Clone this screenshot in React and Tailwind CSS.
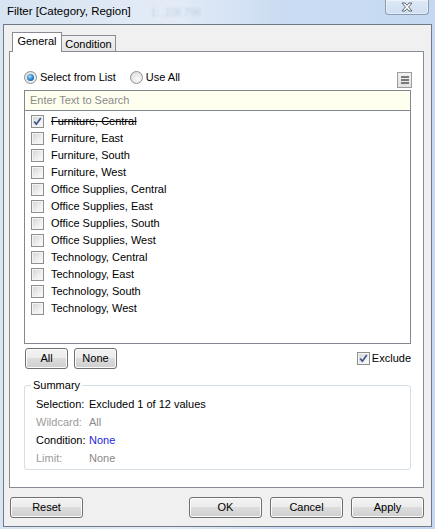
import React from "react";

function Check({ checked }) {
  return (
    <span className="flex w-[13px] h-[13px] shrink-0 border border-[#8e8f8f] bg-[#f4f4f4] p-px">
      <span className="flex w-full h-full items-center justify-center bg-[linear-gradient(135deg,#d6d7d9,#eeeeee_60%,#fafafa)]">
        {checked && (
          <svg width="9" height="9" viewBox="0 0 9 9">
            <path d="M1.2 4.6 L3.4 7.2 L7.8 0.9" fill="none" stroke="#3b5590" strokeWidth="1.7" />
          </svg>
        )}
      </span>
    </span>
  );
}

function Radio({ selected }) {
  return (
    <span className="flex w-[13px] h-[13px] shrink-0 items-center justify-center rounded-full border border-[#8e8f8f] bg-[radial-gradient(circle_at_60%_65%,#fbfbfb,#e2e2e2_70%,#d0d0d0)]">
      {selected && (
        <span className="w-[7px] h-[7px] rounded-full bg-[radial-gradient(circle_at_40%_35%,#9fe0ff,#2c7fc8_55%,#0c3f7c)]" />
      )}
    </span>
  );
}

function WinButton({ children, className = "" }) {
  return (
    <button
      className={
        "flex h-[21px] items-center justify-center rounded-[3px] border border-[#707070] bg-[linear-gradient(#f3f3f3,#ebebeb_50%,#dcdcdc_50%,#cfcfcf)] shadow-[inset_0_0_0_1px_#fbfbfb] text-[11px] text-black " +
        className
      }
    >
      {children}
    </button>
  );
}

const items = [
  "Furniture, Central",
  "Furniture, East",
  "Furniture, South",
  "Furniture, West",
  "Office Supplies, Central",
  "Office Supplies, East",
  "Office Supplies, South",
  "Office Supplies, West",
  "Technology, Central",
  "Technology, East",
  "Technology, South",
  "Technology, West",
];

export default function App() {
  return (
    <div className="w-[435px] h-[529px] overflow-hidden flex flex-col bg-[linear-gradient(90deg,#d8e4f2,#e3ebf6_40%,#cadcf2_65%,#c4d9f1)] font-['Liberation_Sans',Arial,sans-serif] text-[11px] text-black">
      {/* Title bar */}
      <div className="flex h-[24px] shrink-0 items-start">
        <span className="self-center pl-[7px] text-[11.5px] leading-none text-black">Filter [Category, Region]</span>
        <span className="self-center ml-[20px] text-[10px] text-[#a9bdd6] opacity-60 blur-[1.2px]">1: .106 796</span>
        <div className="ml-auto mr-[6px] flex h-[15px] w-[44px] items-center justify-center rounded-b-[4px] border border-t-0 border-[#8a9bb2] bg-[linear-gradient(#dde8f5,#cfdff2)] shadow-[inset_0_0_0_1px_rgba(255,255,255,0.45)]">
          <svg width="12" height="10" viewBox="0 0 12 10">
            <path
              d="M1 1 H4 L6 3.3 L8 1 H11 L7.6 5 L11 9 H8 L6 6.7 L4 9 H1 L4.4 5 Z"
              fill="#ffffff"
              stroke="#4f5b69"
              strokeWidth="0.9"
              strokeLinejoin="round"
            />
          </svg>
        </div>
      </div>

      {/* Client area */}
      <div className="ml-[3px] w-[429px] h-[503px] shrink-0 flex flex-col border border-[#6f7987] bg-[#f0f0f0] pl-[5px] pt-[7px]">
        {/* Tabs */}
        <div className="flex items-end pl-[3px]">
          <div className="relative z-10 flex h-[20px] w-[50px] items-start justify-center border border-b-0 border-[#898c95] bg-white pt-[2px] leading-[13px]">
            General
          </div>
          <div className="flex h-[17px] w-[54px] items-start justify-center border border-b-0 border-l-0 border-[#898c95] bg-[linear-gradient(#f2f2f2,#e4e4e4)] pt-[2px] leading-[13px]">
            Condition
          </div>
        </div>

        {/* Tab panel */}
        <div className="-mt-px w-[415px] h-[437px] border border-[#898c95] bg-white pl-[14px] pr-[11px] pt-[19px] flex flex-col">
          {/* radios */}
          <div className="flex h-[17px] items-start">
            <label className="flex h-[13px] items-center gap-[3px]">
              <Radio selected />
              <span>Select from List</span>
            </label>
            <label className="ml-[14px] flex h-[13px] items-center gap-[3px]">
              <Radio />
              <span>Use All</span>
            </label>
            <div className="ml-auto mt-px flex h-[16px] w-[15px] items-center justify-center border border-[#9c9c9c] bg-[linear-gradient(#f0f0f0,#e2e2e2)]">
              <svg width="8" height="8" viewBox="0 0 8 8">
                <rect x="0" y="0" width="8" height="2" fill="#7a7a7a" />
                <rect x="0" y="3" width="8" height="2" fill="#7a7a7a" />
                <rect x="0" y="6" width="8" height="2" fill="#7a7a7a" />
              </svg>
            </div>
          </div>

          {/* list box */}
          <div className="mt-[2px] h-[254px] w-[387px] border border-[#828790] flex flex-col">
            <div className="h-[20px] shrink-0 border-b border-[#828790] bg-[#fffff0] pl-[5px] leading-[19px] text-[#8a8a8a]">
              Enter Text to Search
            </div>
            <div className="flex flex-col pt-[2px]">
              {items.map((it, i) => (
                <div key={it} className="flex h-[17px] items-center gap-[7px] pl-[6px]">
                  <Check checked={i === 0} />
                  <span className={i === 0 ? "line-through" : ""}>{it}</span>
                </div>
              ))}
            </div>
          </div>

          {/* All / None / Exclude */}
          <div className="mt-[4px] flex h-[21px] w-[387px] items-center">
            <WinButton className="ml-px w-[43px]">All</WinButton>
            <WinButton className="ml-[6px] w-[43px]">None</WinButton>
            <label className="ml-auto flex items-center gap-[2px]">
              <Check checked />
              <span>Exclude</span>
            </label>
          </div>

          {/* Summary */}
          <fieldset className="mt-[10px] w-[387px] rounded-[3px] border border-[#d5dfe5] pb-[2px]">
            <legend className="ml-[6px] px-[2px] leading-[12px]">Summary</legend>
            <div className="grid grid-cols-[53px_1fr] pl-[11px] pt-[4px]">
              <span className="leading-[18px]">Selection:</span>
              <span className="leading-[18px]">Excluded 1 of 12 values</span>
              <span className="leading-[18px] text-[#9b9b9b]">Wildcard:</span>
              <span className="leading-[18px] text-[#8a8a8a]">All</span>
              <span className="leading-[18px]">Condition:</span>
              <span className="leading-[18px] text-[#1f1fe0]">None</span>
              <span className="leading-[18px] text-[#9b9b9b]">Limit:</span>
              <span className="leading-[18px] text-[#8a8a8a]">None</span>
            </div>
          </fieldset>
        </div>

        {/* bottom buttons */}
        <div className="mt-[9px] flex pl-px pr-[7px]">
          <WinButton className="w-[73px]">Reset</WinButton>
          <div className="ml-auto flex gap-[8px]">
            <WinButton className="w-[73px]">OK</WinButton>
            <WinButton className="w-[73px]">Cancel</WinButton>
            <WinButton className="w-[73px]">Apply</WinButton>
          </div>
        </div>
      </div>
    </div>
  );
}
